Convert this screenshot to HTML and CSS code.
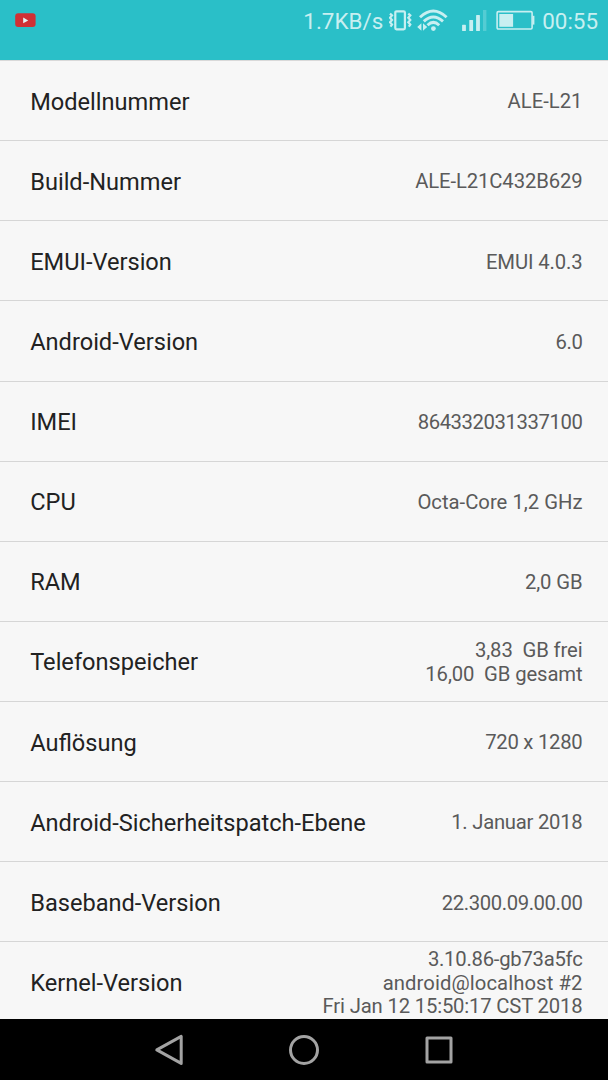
FILE: index.html
```html
<!DOCTYPE html>
<html lang="de">

<head>
  <meta charset="UTF-8">
  <title>Über das Telefon</title>
  <link rel="stylesheet" href="styles.css">
</head>

<body>
  <header class="status-bar">
    <svg class="icon-video" width="22" height="16" viewBox="0 0 22 16">
      <rect x="0.2" y="0.3" width="20.4" height="13.8" rx="3" fill="#d03034" />
      <path d="M8.2 4.6 L13.2 7.4 L8.2 10.2 Z" fill="#e4f4f4" />
    </svg>
    <span class="speed">1.7KB/s</span>
    <svg class="icon-vibrate" width="23" height="24" viewBox="0 0 23 24">
      <rect x="6.3" y="2.3" width="9.6" height="18" rx="1.2" />
      <path d="M1 4.6 L3 6.4 L1 8.7 L3 11 L1 13.3 L3 15.6 L1.5 17.6" />
      <path d="M19.3 4.6 L21.3 6.4 L19.3 8.7 L21.3 11 L19.3 13.3 L21.3 15.6 L19.8 17.6" />
    </svg>
    <svg class="icon-wifi" width="32" height="24" viewBox="0 0 32 24">
      <path d="M3 8.2 Q16.3 -4.2 29.6 8.2" />
      <path d="M6.8 12.4 Q16.3 3.6 26 12.4" />
      <path d="M10.5 16.3 Q16.3 10.5 22.2 16.3" />
      <circle cx="16.4" cy="19.6" r="2.4" />
      <path class="arrow" d="M4.4 14.2 V21.8 L0.2 18 Z M6 14.2 V21.8 L10.2 18 Z" />
    </svg>
    <svg class="icon-signal" width="26" height="24" viewBox="0 0 26 24">
      <rect x="0.1" y="15.7" width="3.8" height="6.3" rx="0.6" />
      <rect x="7.3" y="10.9" width="3.8" height="11.1" rx="0.6" />
      <rect x="14.1" y="5.9" width="3.8" height="16.1" rx="0.6" />
      <rect x="21" y="1" width="3.4" height="21" opacity="0.27" />
    </svg>
    <svg class="icon-battery" width="39" height="20" viewBox="0 0 39 20">
      <rect x="1.1" y="1.6" width="35" height="17.4" rx="1.2" fill="none" stroke="#c8eff1" stroke-width="1.6" />
      <rect x="3.3" y="4" width="13.8" height="12.8" fill="#c8eff1" />
      <path d="M36.5 5.8 H38.4 V14.6 H36.5 Z" fill="#c8eff1" />
    </svg>
    <span class="time">00:55</span>
  </header>

  <main class="list">
    <div class="row">
      <span class="label">Modellnummer</span>
      <span class="value">ALE-L21</span>
    </div>
    <div class="row">
      <span class="label">Build-Nummer</span>
      <span class="value build">ALE-L21C432B629</span>
    </div>
    <div class="row">
      <span class="label">EMUI-Version</span>
      <span class="value build">EMUI 4.0.3</span>
    </div>
    <div class="row">
      <span class="label">Android-Version</span>
      <span class="value digits">6.0</span>
    </div>
    <div class="row">
      <span class="label">IMEI</span>
      <span class="value digits">864332031337100</span>
    </div>
    <div class="row">
      <span class="label">CPU</span>
      <span class="value">Octa-Core 1,2 GHz</span>
    </div>
    <div class="row">
      <span class="label">RAM</span>
      <span class="value build">2,0 GB</span>
    </div>
    <div class="row">
      <span class="label">Telefonspeicher</span>
      <span class="value build">3,83&nbsp; GB frei<br>16,00&nbsp; GB gesamt</span>
    </div>
    <div class="row">
      <span class="label">Auflösung</span>
      <span class="value mixed">720 x 1280</span>
    </div>
    <div class="row">
      <span class="label">Android-Sicherheitspatch-Ebene</span>
      <span class="value mixed">1. Januar 2018</span>
    </div>
    <div class="row">
      <span class="label">Baseband-Version</span>
      <span class="value digits">22.300.09.00.00</span>
    </div>
    <div class="row">
      <span class="label">Kernel-Version</span>
      <span class="value"><span class="mixed">3.10.86-gb73a5fc</span><br><span class="host">android@localhost #2</span><br><span class="date">Fri Jan 12 15:50:17 CST 2018</span></span>
    </div>
  </main>

  <nav class="nav-bar">
    <svg width="32" height="34" viewBox="0 0 32 34">
      <path d="M28.2 3.4 V30.4 L3.8 16.9 Z" />
    </svg>
    <svg width="32" height="34" viewBox="0 0 32 34">
      <circle cx="16" cy="17" r="13.5" />
    </svg>
    <svg width="32" height="34" viewBox="0 0 32 34">
      <rect x="4" y="4.9" width="24" height="24" />
    </svg>
  </nav>
</body>

</html>
```
FILE: styles.css
```css
* {
  box-sizing: border-box;
}

body {
  margin: 0;
  height: 1080px;
  display: flex;
  flex-direction: column;
  overflow: hidden;
  background: #f7f7f7;
  font-family: Roboto, sans-serif;
}

/* status bar */
.status-bar {
  flex: none;
  height: 60px;
  padding: 9px 10px 0 15px;
  display: flex;
  align-items: flex-start;
  background: #2abfc8;
  color: #c8eff1;
  font-size: 22.4px;
  line-height: 24px;
}

.icon-video {
  margin-top: 4px;
}

.speed {
  margin-left: auto;
  margin-right: 6px;
}

.icon-vibrate {
  fill: none;
  stroke: #c8eff1;
  stroke-width: 2.2;
}

.icon-wifi {
  margin-left: 5px;
  fill: none;
  stroke: #c8eff1;
  stroke-width: 2.9;
}

.icon-wifi circle,
.icon-wifi .arrow {
  fill: #c8eff1;
  stroke: none;
}

.icon-signal {
  margin-left: 13px;
  fill: #c8eff1;
}

.icon-battery {
  margin-top: 1px;
  margin-left: 8px;
  margin-right: 7px;
}

/* list */
.list {
  flex: 1;
  min-height: 0;
  overflow: hidden;
  border-top: 1px solid #d9d9d9;
}

.row {
  height: 80.13px;
  padding: 2px 25.5px 0 30.2px;
  display: flex;
  align-items: center;
  justify-content: space-between;
  border-bottom: 1px solid #d6d6d6;
}

.label {
  color: #222;
  font-size: 23.6px;
}

.value {
  padding-top: 1.2px;
  color: #5a5a5a;
  font-size: 20.27px;
  line-height: 23.7px;
  text-align: right;
}

.digits {
  letter-spacing: -0.4px;
}

.mixed {
  letter-spacing: -0.25px;
}

.build {
  letter-spacing: -0.12px;
}

.date {
  letter-spacing: -0.17px;
}

.host {
  letter-spacing: 0.08px;
}

/* navigation bar */
.nav-bar {
  flex: none;
  height: 61px;
  padding-left: 153px;
  display: flex;
  align-items: center;
  gap: 103px;
  background: #000;
}

.nav-bar svg {
  fill: none;
  stroke: #a3a3a3;
  stroke-width: 3;
  stroke-linejoin: round;
}
```
